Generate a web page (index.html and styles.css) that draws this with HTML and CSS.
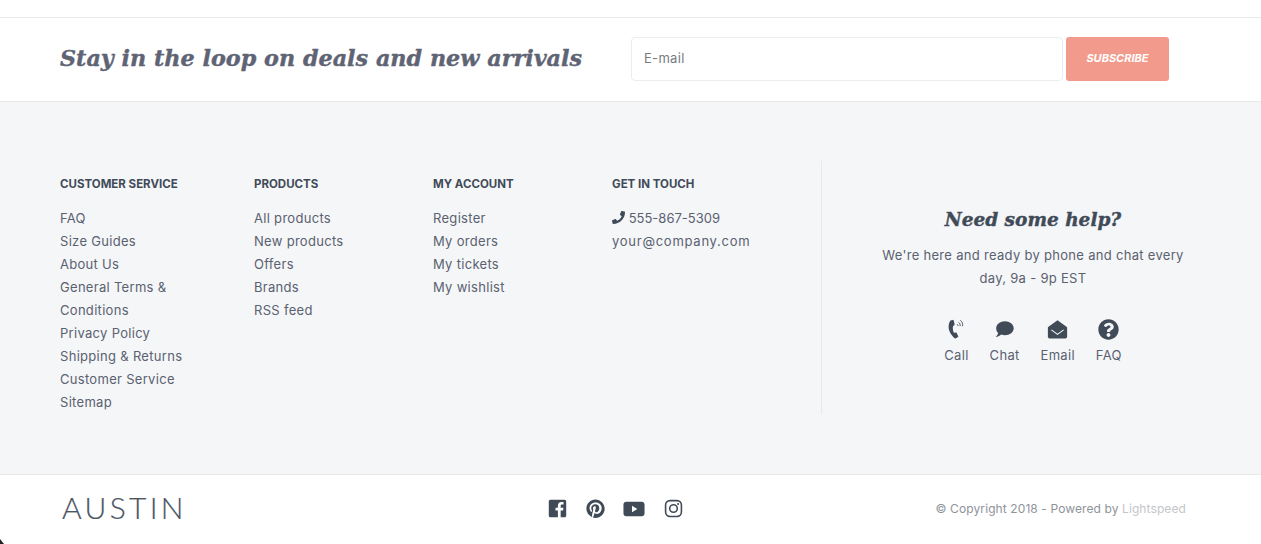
FILE: index.html
```html
<!DOCTYPE html>
<html lang="en">
<head>
    <meta charset="UTF-8">
    <title>Austin</title>
    <link rel="stylesheet" href="styles.css">
</head>
<body>
    <div class="top-strip"></div>

    <!-- newsletter -->
    <section class="newsletter">
        <h2 class="newsletter-title">Stay in the loop on deals and new arrivals</h2>
        <form class="newsletter-form">
            <input class="newsletter-input" type="text" placeholder="E-mail">
            <button class="newsletter-button" type="button">SUBSCRIBE</button>
        </form>
    </section>

    <!-- link columns + help -->
    <section class="links">
        <div class="link-col col-service">
            <h3>CUSTOMER SERVICE</h3>
            <a href="#">FAQ</a>
            <a href="#">Size Guides</a>
            <a href="#">About Us</a>
            <a href="#">General Terms &amp; Conditions</a>
            <a href="#">Privacy Policy</a>
            <a href="#">Shipping &amp; Returns</a>
            <a href="#">Customer Service</a>
            <a href="#">Sitemap</a>
        </div>
        <div class="link-col col-products">
            <h3>PRODUCTS</h3>
            <a href="#">All products</a>
            <a href="#">New products</a>
            <a href="#">Offers</a>
            <a href="#">Brands</a>
            <a href="#">RSS feed</a>
        </div>
        <div class="link-col col-account">
            <h3>MY ACCOUNT</h3>
            <a href="#">Register</a>
            <a href="#">My orders</a>
            <a href="#">My tickets</a>
            <a href="#">My wishlist</a>
        </div>
        <div class="link-col col-contact">
            <h3>GET IN TOUCH</h3>
            <a class="contact-phone" href="#">
                <svg class="phone-icon" viewBox="0 0 512 512"><path d="M493 24 389 0c-11-3-23 3-27 14l-48 112c-4 10-1 21 7 28l60 50c-36 77-99 140-177 177l-50-60c-7-8-18-11-28-7L14 362c-11 5-17 16-14 28l24 104c3 10 12 18 24 18 256 0 464-207 464-464 0-12-8-21-19-24z"/></svg>
                555-867-5309
            </a>
            <a class="contact-mail" href="#">your@company.com</a>
        </div>
        <div class="help">
            <h2 class="help-title">Need some help?</h2>
            <p class="help-text">We're here and ready by phone and chat every day, 9a - 9p EST</p>
            <div class="help-items">
                <a class="help-item" href="#">
                    <svg viewBox="0 0 24 24"><path d="M5 1.800 7.800 1c.5-.1.900.1 1 .6l1 4.500c.1.400-.1.700-.4.900L8 8.200c-.4 2.500-.1 5 1 7.400l2.300-.2c.4 0 .7.2.9.5l1.800 3.700c.2.400.1.900-.3 1.100l-2.300 1.400c-.5.300-1.100.3-1.500-.1C6.400 19.300 3.300 14.500 3 9.500 2.900 6.800 3.500 4 5 1.800z"/><path class="wave" d="M12.800 6c.8.400 1.100 1.200 1 2M14.300 3.800c1.600.9 2.100 2.500 1.900 4.300M16.300 1.500c2.300 1.400 3 4 2.600 6.800"/></svg>
                    <span>Call</span>
                </a>
                <a class="help-item" href="#">
                    <svg viewBox="0 0 24 24"><path d="M12.500 2.500C18 2.500 22.500 5.900 22.500 10.500s-4.500 8-10 8c-1.500 0-2.900-.3-4.100-.7C7 19 4.600 20.500 2 20.500c1.500-1.400 2.500-3 2.700-4.500C3.300 14.600 2.500 12.700 2.500 10.500c0-4.600 4.500-8 10-8z"/></svg>
                    <span>Chat</span>
                </a>
                <a class="help-item" href="#">
                    <svg viewBox="0 0 24 24"><path d="M12 1.500 22.300 8.800c.4.300.7.800.7 1.300v10.300c0 1-.8 1.800-1.800 1.800H2.800c-1 0-1.800-.8-1.800-1.800V10.100c0-.5.3-1 .7-1.300z"/><path class="flap" d="M5 12.500l7 5 7-5"/></svg>
                    <span>Email</span>
                </a>
                <a class="help-item" href="#">
                    <svg viewBox="0 0 512 512"><path d="M504 256c0 137-111 248-248 248S8 393 8 256 119 8 256 8s248 111 248 248zM263 90c-54 0-89 23-116 63-4 5-3 12 3 16l35 26c5 4 13 3 17-2 18-23 30-36 58-36 21 0 46 13 46 33 0 15-12 23-33 34-23 13-55 30-55 72v7c0 7 5 12 12 12h56c7 0 12-5 12-12v-4c0-29 86-31 86-110 0-60-62-99-121-99zm-7 254c-26 0-47 21-47 47s21 47 47 47 47-21 47-47-21-47-47-47z"/></svg>
                    <span>FAQ</span>
                </a>
            </div>
        </div>
    </section>

    <!-- bottom bar -->
    <footer class="bottom">
        <div class="logo">AUSTIN</div>
        <div class="social">
            <svg class="icon-fb" viewBox="0 0 24 24"><path fill-rule="evenodd" d="M3 1h18c1.100 0 2 .9 2 2v18c0 1.100-.9 2-2 2h-5v-8.500h3l.5-3.500H16V8.800c0-1 .4-1.700 1.800-1.700h1.800V4c-.5-.1-1.500-.2-2.600-.2-2.700 0-4.500 1.600-4.500 4.600V11H9.500v3.500h3V23H3c-1.100 0-2-.9-2-2V3c0-1.100.9-2 2-2z"/></svg>
            <svg class="icon-pin" viewBox="0 0 24 24"><path d="M12 .5C5.600.5.500 5.600.500 12c0 4.900 3 9 7.300 10.700-.1-.9-.2-2.300 0-3.300l1.400-5.700s-.4-.7-.4-1.700c0-1.600.9-2.800 2.100-2.800 1 0 1.500.7 1.500 1.600 0 1-.6 2.500-1 3.900-.3 1.200.6 2.100 1.700 2.100 2.100 0 3.700-2.200 3.700-5.400 0-2.800-2-4.800-4.900-4.800-3.300 0-5.300 2.500-5.300 5.100 0 1 .4 2.100.9 2.700.1.100.1.200.1.300l-.3 1.400c-.1.200-.2.300-.4.200-1.500-.7-2.400-2.900-2.400-4.600 0-3.800 2.700-7.200 7.900-7.200 4.100 0 7.400 3 7.400 6.900 0 4.100-2.600 7.500-6.200 7.500-1.200 0-2.400-.6-2.700-1.400l-.8 2.800c-.3 1-1 2.300-1.500 3.100 1.100.3 2.300.5 3.500.5 6.400 0 11.500-5.100 11.500-11.500S18.400.5 12 .5z"/></svg>
            <svg class="icon-yt" viewBox="0 0 24 17"><path fill-rule="evenodd" d="M3.500.5h17c1.700 0 3 1.300 3 3v10c0 1.700-1.300 3-3 3h-17c-1.700 0-3-1.300-3-3v-10c0-1.700 1.300-3 3-3zM9.800 5v7l5.800-3.500z"/></svg>
            <svg class="icon-ig" viewBox="0 0 24 24"><rect x="2" y="2" width="20" height="20" rx="5.500"/><circle cx="12" cy="12" r="4.800"/><circle class="dot" cx="17.800" cy="6.200" r="1.300"/></svg>
        </div>
        <div class="copyright">© Copyright 2018 - Powered by <a href="#">Lightspeed</a></div>
        <div class="corner"></div>
    </footer>
</body>
</html>
```

FILE: styles.css
```css
* {
    margin: 0;
    padding: 0;
    box-sizing: border-box;
}

body {
    font-family: "Inter", "Liberation Sans", sans-serif;
    background: white;
    color: #4a5361;
    overflow: hidden;
}

a {
    color: inherit;
    text-decoration: none;
}

.top-strip {
    height: 18px;
    border-bottom: 1px solid #e8e9eb;
}

/* newsletter */
.newsletter {
    height: 84px;
    padding: 0 0 2px 60px;
    display: flex;
    align-items: center;
    border-bottom: 1px solid #e8e9eb;
}

.newsletter-title {
    width: 571px;
    font-family: "DejaVu Serif", serif;
    font-size: 22.3px;
    font-weight: bold;
    font-style: italic;
    color: #5f6474;
    -webkit-text-stroke: 0.4px #5f6474;
    white-space: nowrap;
    margin-bottom: 2px;
}

.newsletter-form {
    display: flex;
    gap: 3px;
}

.newsletter-input {
    width: 432px;
    height: 44px;
    padding: 0 12px 2px;
    border: 1px solid #ebecee;
    border-radius: 4px;
    font-family: inherit;
    font-size: 13px;
    letter-spacing: 0.3px;
    background: white;
}

.newsletter-input::placeholder {
    color: #777b80;
}

.newsletter-button {
    width: 103px;
    height: 44px;
    border: none;
    border-radius: 3px;
    background: #f29b8c;
    color: white;
    font-family: inherit;
    font-size: 11px;
    font-weight: 700;
    font-style: italic;
    padding-bottom: 2px;
}

/* columns */
.links {
    height: 373px;
    padding: 59px 0 0 60px;
    background: #f5f6f8;
    border-bottom: 1px solid #e8e9eb;
    display: flex;
    align-items: flex-start;
}

.link-col {
    flex: none;
    padding-top: 12px;
    font-size: 13px;
    line-height: 23px;
    letter-spacing: 0.3px;
}

.link-col h3 {
    font-size: 11.5px;
    line-height: 23px;
    font-weight: 700;
    letter-spacing: 0;
    color: #414b58;
    margin-bottom: 11px;
    white-space: nowrap;
}

.link-col a {
    display: block;
    color: #5a6170;
}

.col-service { width: 194px; padding-right: 60px; }
.col-products { width: 179px; }
.col-account { width: 179px; }
.col-contact { width: 209px; }

.link-col .contact-phone { letter-spacing: 0; }
.link-col .contact-mail { letter-spacing: 0.74px; }

.phone-icon {
    width: 13px;
    height: 13px;
    fill: #414b58;
    vertical-align: -1px;
}

/* help */
.help {
    width: 423px;
    height: 253px;
    border-left: 1px solid #e8e9eb;
    padding-top: 47px;
    display: flex;
    flex-direction: column;
    align-items: center;
}

.help-title {
    font-family: "DejaVu Serif", serif;
    font-size: 18.5px;
    font-weight: bold;
    font-style: italic;
    line-height: 24px;
    color: #414b58;
    -webkit-text-stroke: 0.4px #414b58;
}

.help-text {
    width: 315px;
    margin-top: 12px;
    font-size: 13px;
    line-height: 23px;
    letter-spacing: 0.3px;
    text-align: center;
    color: #5a6170;
}

.help-items {
    margin-top: 29px;
    display: flex;
    gap: 21px;
}

.help-item {
    display: flex;
    flex-direction: column;
    align-items: center;
    font-size: 13px;
    letter-spacing: 0.3px;
    color: #5a6170;
    line-height: 18px;
}

.help-item svg {
    width: 21px;
    height: 21px;
    fill: #414b58;
    margin-bottom: 6px;
}

.help-item .wave {
    fill: none;
    stroke: #414b58;
    stroke-width: 1;
}

.help-item .flap {
    fill: none;
    stroke: #f5f6f8;
    stroke-width: 1.2;
}

/* bottom bar */
.bottom {
    height: 69px;
    padding: 0 75px 2px 62px;
    display: flex;
    align-items: center;
    position: relative;
}

.logo {
    width: 486px;
    font-family: "Lato", sans-serif;
    font-size: 30px;
    font-weight: 300;
    letter-spacing: 3.3px;
    color: #4a5563;
    -webkit-text-stroke: 0.2px #4a5563;
    padding-bottom: 4px;
}

.social {
    display: flex;
    align-items: center;
    gap: 18.5px;
    flex: 1;
}

.social svg {
    width: 19px;
    height: 19px;
    fill: #414b58;
}

.social .icon-yt {
    width: 22px;
    height: 16px;
}

.social .icon-ig {
    fill: none;
    stroke: #414b58;
    stroke-width: 2;
}

.social .icon-ig .dot {
    fill: #414b58;
    stroke: none;
}

.copyright {
    font-size: 12px;
    letter-spacing: 0.1px;
    color: #8f939a;
}

.copyright a {
    color: #c3c6ca;
}

/* dark speck in the bottom left corner */
.corner {
    position: absolute;
    left: 0;
    bottom: 0;
    width: 4px;
    height: 5px;
    background: #222;
    clip-path: polygon(0 0, 100% 100%, 0 100%);
}
```
